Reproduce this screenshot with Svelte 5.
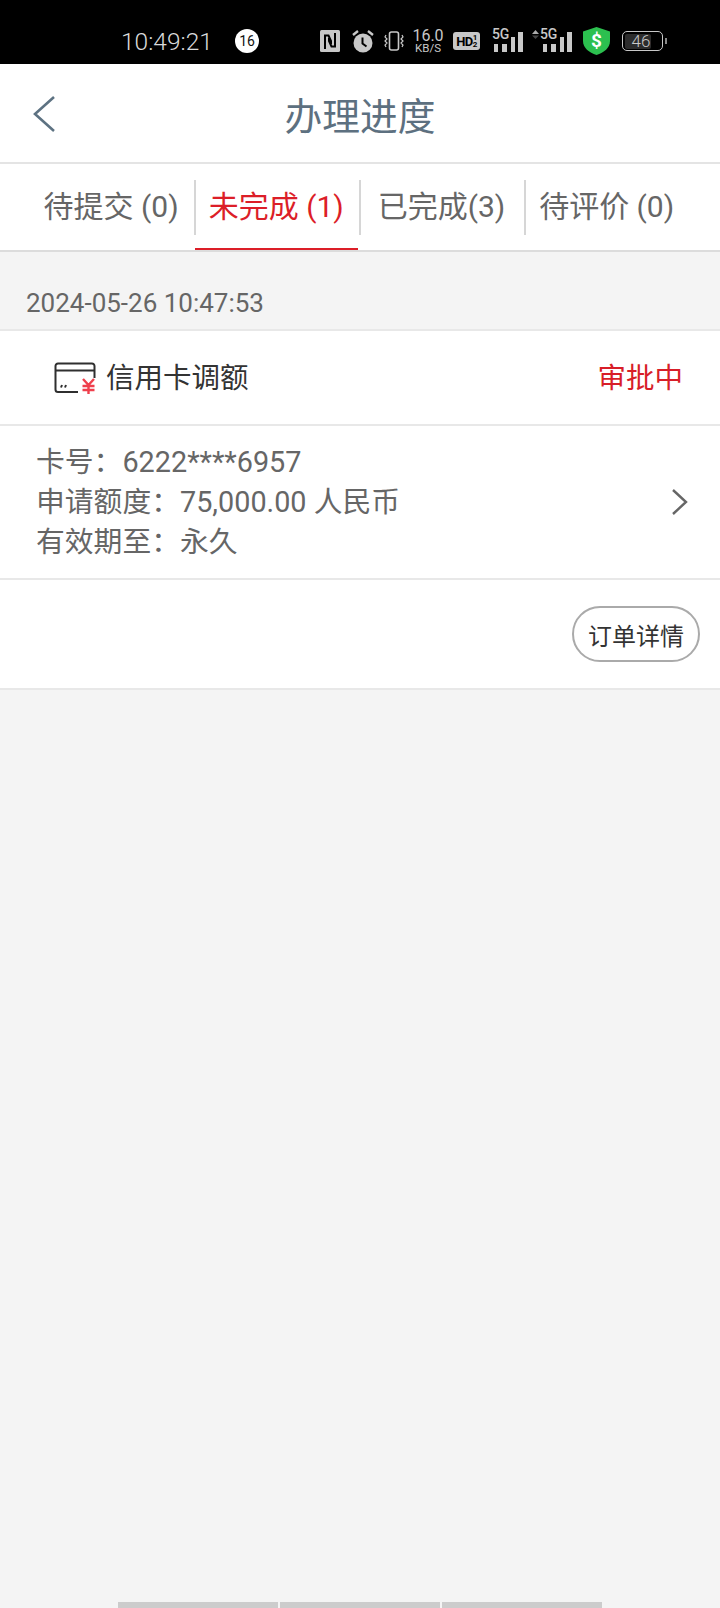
<script>
	const tabs = [
		{ label: '待提交 (0)' },
		{ label: '未完成 (1)', active: true },
		{ label: '已完成(3)' },
		{ label: '待评价 (0)' }
	];
</script>

<div class="page">
	<!-- Status bar -->
	<div class="statusbar">
		<span class="time">10:49:21</span>
		<span class="badge">16</span>

		<svg class="ic-nfc" viewBox="0 0 20 22" width="20" height="22">
			<rect width="20" height="22" rx="1.500" fill="#c8c8c8" />
			<path d="M5 19V5.500h3.500L11 11v3M15 3v13.500h-3.500L9 11V8" fill="none" stroke="#000" stroke-width="2" />
		</svg>
		<svg class="ic-alarm" viewBox="0 0 22 24" width="22" height="24">
			<circle cx="11" cy="14" r="9.500" fill="#c8c8c8" />
			<path d="M10.500 8.500v6l4 3" fill="none" stroke="#000" stroke-width="2" />
			<path d="M1 6l5-4M21 6l-5-4" stroke="#c8c8c8" stroke-width="2.400" />
		</svg>
		<svg class="ic-vibrate" viewBox="0 0 20 20" width="20" height="20">
			<rect x="5.500" y="1" width="9" height="18" rx="2" fill="none" stroke="#c8c8c8" stroke-width="1.600" />
			<path d="M2 4L1 6l2 2-2 2 2 2-2 2 1 2M18 4l1 2-2 2 2 2-2 2 2 2-1 2" fill="none" stroke="#c8c8c8" stroke-width="1.200" />
		</svg>
		<span class="speed"><b>16.0</b><i>KB/S</i></span>
		<span class="hd">HD<small>1<br />2</small></span>

		<span class="signal first">
			<span class="g">5G</span>
			<svg viewBox="0 0 31 20" width="31" height="20">
				<path d="M2 12h4v8H2zM10 12h5v8h-5zM19 5h4v15h-4zM26 0h5v20h-5z" fill="#c8c8c8" />
			</svg>
		</span>
		<span class="signal second">
			<svg class="up" viewBox="0 0 7 9" width="7" height="9">
				<path d="M0 4l3.500-4L7 4z" fill="#aaa" />
				<path d="M0 5.500h7L3.500 9z" fill="#444" />
			</svg>
			<span class="g">5G</span>
			<svg viewBox="0 0 31 20" width="31" height="20">
				<path d="M2 12h4v8H2zM10 12h5v8h-5zM19 5h4v15h-4zM26 0h5v20h-5z" fill="#c8c8c8" />
			</svg>
		</span>

		<svg class="ic-shield" viewBox="0 0 27 28" width="27" height="28">
			<path d="M13.500 0L27 4.500V14c0 7-6 11.500-13.500 14C6 25.500 0 21 0 14V4.500z" fill="#2cc04f" />
			<text x="13.500" y="20" text-anchor="middle" class="dollar">$</text>
		</svg>

		<span class="battery"><span class="level">46</span></span>
		<span class="nub"></span>
	</div>

	<!-- Title bar -->
	<header class="titlebar">
		<svg class="back" viewBox="0 0 24 38" width="24" height="38">
			<path d="M22 2L3 19l19 17" fill="none" stroke="#5d7282" stroke-width="2.600" />
		</svg>
		<h1>办理进度</h1>
	</header>

	<!-- Tabs -->
	<nav class="tabs">
		{#each tabs as tab, i}
			<div class="tab" class:active={tab.active} class:sep={i > 0}>
				<span>{tab.label}</span>
			</div>
		{/each}
	</nav>

	<div class="date">2024-05-26 10:47:53</div>

	<!-- Order card -->
	<section class="card">
		<div class="card-head">
			<div class="card-title">
				<svg viewBox="0 0 42 32" width="42" height="32">
					<path d="M24 30H4a2.500 2.500 0 0 1-2.500-2.500V4A2.500 2.500 0 0 1 4 1.500h34A2.500 2.500 0 0 1 40.500 4v12" fill="none" stroke="#2f2f2f" stroke-width="2" />
					<path d="M1.500 8.500h39" stroke="#2f2f2f" stroke-width="2" />
					<path d="M7 25.500l1-2.500M11 25.500l1-2.500" stroke="#2f2f2f" stroke-width="2" />
					<path d="M29 17l5.500 6 5.500-6M28.500 24h12M28.500 28h12M34.500 23v9" fill="none" stroke="#ef3f4c" stroke-width="2.400" />
				</svg>
				<span>信用卡调额</span>
			</div>
			<span class="status">审批中</span>
		</div>

		<div class="card-body">
			<div class="lines">
				<div>卡号：6222****6957</div>
				<div>申请额度：75,000.00 人民币</div>
				<div>有效期至：永久</div>
			</div>
			<svg class="chevron" viewBox="0 0 18 28" width="18" height="28">
				<path d="M2 2l13 12L2 26" fill="none" stroke="#666" stroke-width="2.400" />
			</svg>
		</div>

		<div class="card-foot">
			<button class="detail">订单详情</button>
		</div>
	</section>

	<div class="spacer"></div>

	<!-- Home indicator -->
	<div class="homebar">
		<span></span>
		<span></span>
		<span></span>
	</div>
</div>

<style>
	:global(body) {
		margin: 0;
		background: #f4f4f4;
	}

	.page {
		width: 720px;
		height: 1608px;
		display: flex;
		flex-direction: column;
		background: #f4f4f4;
		font-family: Roboto, 'Noto Sans CJK SC', sans-serif;
		overflow: hidden;
	}

	/* Status bar */
	.statusbar {
		height: 64px;
		flex: none;
		box-sizing: border-box;
		background: #000;
		color: #c8c8c8;
		display: flex;
		align-items: center;
		padding: 18px 0 0 121px;
	}
	.time {
		width: 114px;
		font-size: 24.500px;
		font-weight: 300;
		color: #dadada;
	}
	.badge {
		width: 24px;
		height: 24px;
		border-radius: 50%;
		background: #fff;
		color: #111;
		font-size: 14px;
		display: flex;
		align-items: center;
		justify-content: center;
	}
	.ic-nfc {
		margin-left: 61px;
	}
	.ic-alarm {
		margin-left: 12px;
	}
	.ic-vibrate {
		margin-left: 10px;
	}
	.speed {
		margin-left: 7px;
		width: 34px;
		display: flex;
		flex-direction: column;
		align-items: center;
	}
	.speed b {
		font-size: 16px;
		font-weight: 400;
		line-height: 14px;
	}
	.speed i {
		font-style: normal;
		font-size: 11.500px;
		font-weight: 400;
		line-height: 11px;
	}
	.hd {
		margin-left: 8px;
		width: 27px;
		height: 18px;
		border-radius: 3px;
		background: #c8c8c8;
		color: #000;
		font-size: 13px;
		font-weight: 700;
		letter-spacing: -0.5px;
		display: flex;
		align-items: center;
		justify-content: center;
	}
	.hd small {
		font-size: 8px;
		line-height: 7px;
	}
	.signal {
		position: relative;
		display: block;
		height: 22px;
	}
	.signal svg:not(.up) {
		position: absolute;
		right: 0;
		bottom: 0;
	}
	.signal .g {
		position: absolute;
		top: -3px;
		z-index: 1;
		font-size: 14px;
		font-weight: 500;
		line-height: 14px;
		letter-spacing: -0.3px;
		background: #000;
		padding-right: 1px;
	}
	.signal.first {
		margin-left: 12px;
		width: 31px;
	}
	.signal.first .g {
		left: 0;
	}
	.signal.second {
		margin-left: 9px;
		width: 40px;
	}
	.signal.second .g {
		left: 8px;
	}
	.up {
		position: absolute;
		left: 0;
		top: 0;
	}
	.ic-shield {
		margin-left: 11px;
	}
	.dollar {
		fill: #fff;
		font-size: 19px;
		font-weight: 700;
		font-family: Roboto, sans-serif;
	}
	.battery {
		margin-left: 12px;
		width: 41px;
		height: 20px;
		box-sizing: border-box;
		border: 1.500px solid #c8c8c8;
		border-radius: 5px;
		padding: 1.500px;
		display: flex;
	}
	.level {
		width: 26px;
		background: #2c2c2c;
		border-radius: 2px;
		font-size: 17px;
		font-weight: 300;
		line-height: 14px;
		white-space: nowrap;
		padding-left: 7px;
		box-sizing: border-box;
	}
	.nub {
		width: 2px;
		height: 6px;
		margin-left: 2px;
		background: #888;
	}

	/* Title bar */
	.titlebar {
		height: 100px;
		flex: none;
		box-sizing: border-box;
		background: #fff;
		border-bottom: 2px solid #e4e4e4;
		position: relative;
		display: flex;
		align-items: center;
		justify-content: center;
	}
	.titlebar h1 {
		margin: 0;
		font-size: 37.700px;
		font-weight: 400;
		color: #5d7080;
	}
	.back {
		position: absolute;
		left: 32px;
		top: 31px;
	}

	/* Tabs */
	.tabs {
		height: 88px;
		flex: none;
		box-sizing: border-box;
		background: #fff;
		border-bottom: 2px solid #dcdcdc;
		padding: 0 0 0 28.500px;
		display: grid;
		grid-template-columns: repeat(4, 165.200px);
	}
	.tab {
		position: relative;
		display: flex;
		align-items: center;
		justify-content: center;
		font-size: 30px;
		color: #666;
		padding-bottom: 6px;
		box-sizing: border-box;
		white-space: nowrap;
	}
	.tab.sep::before {
		content: '';
		position: absolute;
		left: 0;
		top: 16px;
		bottom: 15px;
		width: 2px;
		background: #d6d6d6;
	}
	.tab.active {
		color: #dc1e28;
	}
	.tab.active::after {
		content: '';
		position: absolute;
		left: 1px;
		right: 1px;
		bottom: 0;
		height: 2px;
		background: #dc1e28;
	}

	.date {
		height: 77px;
		flex: none;
		box-sizing: border-box;
		padding: 35px 0 0 26px;
		font-size: 26px;
		line-height: 32px;
		color: #666;
	}

	/* Card */
	.card {
		flex: none;
		background: #fff;
		border-top: 2px solid #e8e8e8;
		border-bottom: 2px solid #e8e8e8;
	}
	.card-head {
		height: 95px;
		box-sizing: border-box;
		border-bottom: 2px solid #e8e8e8;
		padding: 0 37px 5px 54px;
		display: flex;
		align-items: center;
		justify-content: space-between;
	}
	.card-title {
		display: flex;
		align-items: center;
		gap: 10px;
		font-size: 28.500px;
		color: #333;
	}
	.card-title svg {
		margin-top: 6px;
	}
	.status {
		font-size: 28.500px;
		color: #d81e28;
	}
	.card-body {
		height: 154px;
		box-sizing: border-box;
		border-bottom: 2px solid #e8e8e8;
		padding: 0 31px 0 36px;
		display: flex;
		align-items: center;
		justify-content: space-between;
	}
	.lines {
		font-size: 28.800px;
		line-height: 40px;
		color: #666;
	}
	.card-foot {
		height: 108px;
		box-sizing: border-box;
		padding: 0 20px 0 0;
		display: flex;
		align-items: center;
		justify-content: flex-end;
	}
	.detail {
		width: 128px;
		height: 56px;
		padding: 0;
		border: 2px solid #aaa;
		border-radius: 28px;
		background: #fff;
		font-family: inherit;
		font-size: 24px;
		color: #333;
	}

	.spacer {
		flex: 1;
	}

	/* Home indicator */
	.homebar {
		flex: none;
		height: 6px;
		padding-left: 118px;
		display: flex;
		gap: 2px;
	}
	.homebar span {
		width: 160px;
		background: #cccccc;
	}
</style>
